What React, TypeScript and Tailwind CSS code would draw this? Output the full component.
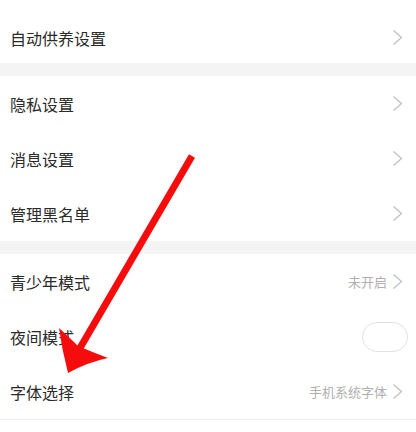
const font = { fontFamily: '"Noto Sans CJK SC", "Noto Sans", sans-serif' };

function Chevron() {
  return (
    <svg width="11" height="17" viewBox="0 0 11 17" className="ml-[5px]">
      <polyline points="1.5,1.5 9.5,8.5 1.5,15.5" fill="none" stroke="#c4c4c4" strokeWidth="1.4" />
    </svg>
  );
}

function Row({ label, value, toggle, first }: { label: string; value?: string; toggle?: boolean; first?: boolean }) {
  return (
    <div className={`flex items-center justify-between pl-[10px] pr-[13px] ${first ? "h-[63px] pt-[12px]" : "h-[55px]"}`}>
      <span className="text-[16px] text-[#2a2a2a]">{label}</span>
      {toggle ? (
        <div className="w-[46px] h-[30px] rounded-full border-[1.5px] border-[#e2e2e2] bg-white mr-[-5px]" />
      ) : (
        <div className="flex items-center">
          {value && <span className="text-[13px] text-[#b0b0b0]">{value}</span>}
          <Chevron />
        </div>
      )}
    </div>
  );
}

export default function App() {
  return (
    <div className="relative w-[416px] h-[432px] bg-white overflow-hidden" style={font}>
      <Row label="自动供养设置" first />
      <div className="h-[13px] bg-[#f4f4f4]" />
      <Row label="隐私设置" />
      <Row label="消息设置" />
      <Row label="管理黑名单" />
      <div className="h-[13px] bg-[#f4f4f4]" />
      <Row label="青少年模式" value="未开启" />
      <Row label="夜间模式" toggle />
      <Row label="字体选择" value="手机系统字体" />
      <div className="border-t border-[#eeeeee]" />

      {/* red arrow annotation */}
      <svg className="absolute inset-0 pointer-events-none" width="416" height="432" viewBox="0 0 416 432">
        <line x1="192" y1="156" x2="80" y2="348" stroke="#f50c0c" strokeWidth="7" />
        <path d="M68 373 Q62 350 59 328 Q70 338 78 346 Q92 352 108 358 Q88 362 68 373 Z" fill="#f50c0c" />
      </svg>
    </div>
  );
}
